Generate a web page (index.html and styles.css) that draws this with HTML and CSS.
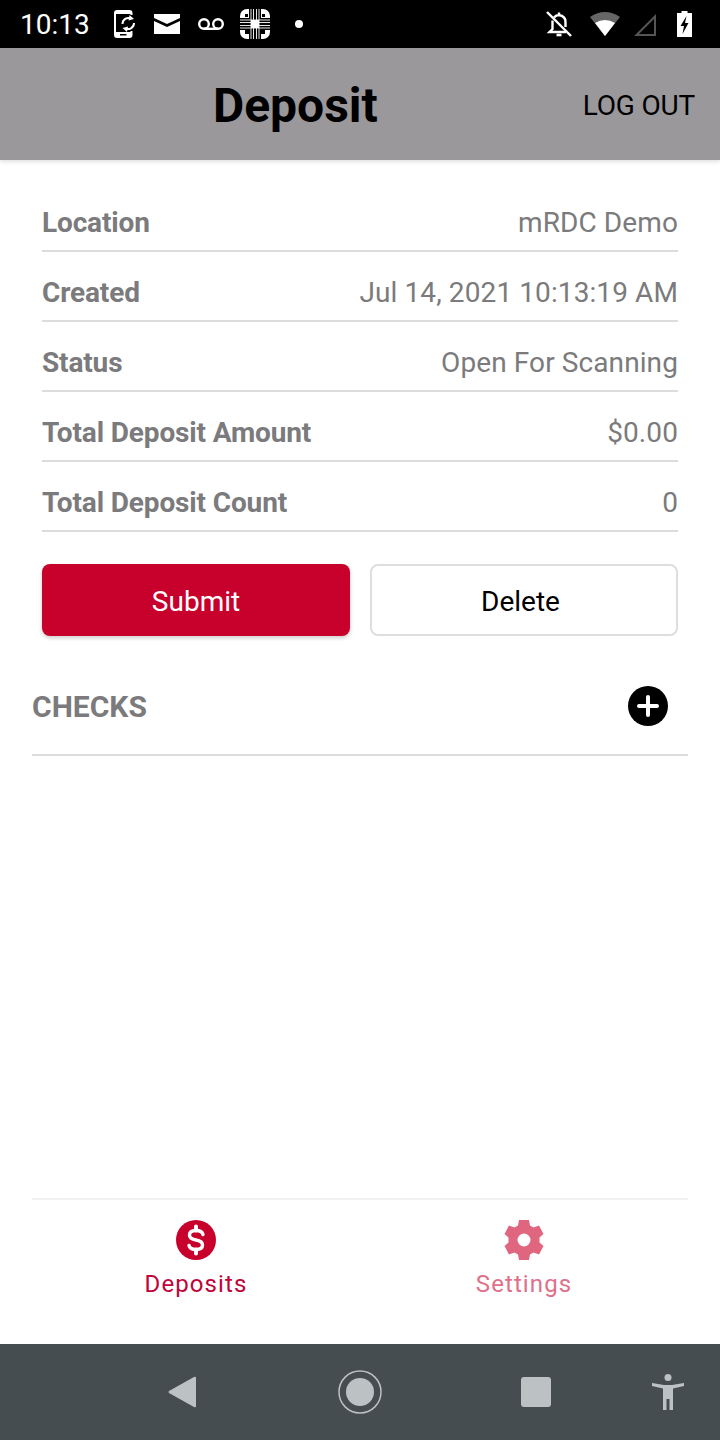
FILE: index.html
```html
<!DOCTYPE html>
<html lang="en">
<head>
  <meta charset="UTF-8" />
  <meta name="viewport" content="width=device-width, initial-scale=1.0" />
  <title>Deposit</title>
  <link rel="stylesheet" href="styles.css">
</head>
<body>
  <!-- Android status bar -->
  <div class="status-bar">
    <span class="clock">10:13</span>
    <svg class="st-sync" width="22" height="28" viewBox="0 0 22 28">
      <path d="M17.500 5V3Q17.500 1 15.500 1H3Q1 1 1 3V25Q1 27 3 27H15.500Q17.500 27 17.500 25V21" fill="none" stroke="#fff" stroke-width="2"/>
      <rect x="1" y="1" width="16.500" height="3" fill="#fff"/>
      <rect x="1" y="22" width="16.500" height="5" fill="#fff"/>
      <rect x="6" y="24" width="6.500" height="1.500" fill="#000"/>
      <path d="M8.500 14A6 6 0 0 1 17 8.500M20 13A6 6 0 0 1 11.500 18.500" fill="none" stroke="#fff" stroke-width="2"/>
      <path d="M15.500 5L20 9L14.500 10.500ZM13 22L8.500 18L14 16.500Z" fill="#fff"/>
    </svg>
    <svg class="st-mail" width="26" height="20" viewBox="0 0 26 20">
      <path d="M0 0H26V4L13 10L0 4ZM0 7L13 13L26 7V20H0Z" fill="#fff"/>
    </svg>
    <svg class="st-voicemail" width="26" height="12" viewBox="0 0 26 12">
      <path d="M6 10.800H20" stroke="#fff" stroke-width="2.400"/>
      <circle cx="6" cy="6" r="4.800" fill="none" stroke="#fff" stroke-width="2.400"/>
      <circle cx="20" cy="6" r="4.800" fill="none" stroke="#fff" stroke-width="2.400"/>
    </svg>
    <svg class="st-grid" width="30" height="30" viewBox="0 0 30 30">
      <rect width="30" height="30" rx="7" fill="#fff"/>
      <path d="M9 0H21V9H30V21H21V30H9V21H0V9H9Z" fill="#000"/>
      <path d="M11 0V30M13.500 0V30M16.500 0V30M19 0V30M0 11H30M0 13.500H30M0 16.500H30M0 19H30" stroke="#fff" stroke-width=".9"/>
      <rect x="11" y="11" width="8" height="8" fill="#fff"/>
      <rect x="21" y="21" width="4" height="4" fill="#000"/>
      <rect x="5" y="21" width="4" height="4" fill="#000"/>
      <rect x="5" y="5" width="3" height="3" fill="#000"/>
      <rect x="22" y="5" width="3" height="3" fill="#000"/>
    </svg>
    <span class="st-dot"></span>
    <span class="st-spacer"></span>
    <svg class="st-bell" width="26" height="26" viewBox="0 0 26 26">
      <path d="M13 1.500V4M6.500 9.500V18L3.500 21H20M19.500 16V11Q19.500 5 13 4Q10 4 8 6.500" fill="none" stroke="#fff" stroke-width="2.400"/>
      <path d="M10.500 24H15.500" stroke="#fff" stroke-width="2.600"/>
      <path d="M1 1L25 25" stroke="#fff" stroke-width="2.400"/>
    </svg>
    <svg class="st-wifi" width="30" height="24" viewBox="0 0 30 24">
      <path d="M0 5Q15 -5 30 5L15 24Z" fill="#666"/>
      <path d="M5 11Q15 5 25 11L15 24Z" fill="#fff"/>
    </svg>
    <svg class="st-signal" width="22" height="22" viewBox="0 0 22 22">
      <path d="M21 2.500V21H2.500Z" fill="none" stroke="#555" stroke-width="2"/>
    </svg>
    <svg class="st-battery" width="15" height="26" viewBox="0 0 15 26">
      <path d="M4.500 0H10.500V2H15V26H0V2H4.500Z" fill="#fff"/>
      <path d="M9.500 5L3.500 15H7L5.500 23L11.500 12H8Z" fill="#000"/>
    </svg>
  </div>

  <div class="header">
    <h1 class="title">Deposit</h1>
    <span class="logout">LOG OUT</span>
  </div>

  <div class="content">
    <div class="details">
      <div class="row"><span class="label">Location</span><span class="value">mRDC Demo</span></div>
      <div class="row"><span class="label">Created</span><span class="value">Jul 14, 2021 10:13:19 AM</span></div>
      <div class="row"><span class="label">Status</span><span class="value">Open For Scanning</span></div>
      <div class="row"><span class="label">Total Deposit Amount</span><span class="value">$0.00</span></div>
      <div class="row"><span class="label">Total Deposit Count</span><span class="value">0</span></div>
    </div>

    <div class="actions">
      <button class="btn btn-submit">Submit</button>
      <button class="btn btn-delete">Delete</button>
    </div>

    <div class="checks">
      <span class="checks-title">CHECKS</span>
      <svg class="add" width="40" height="40" viewBox="0 0 40 40">
        <circle cx="20" cy="20" r="20" fill="#000"/>
        <path d="M20 11V29M11 20H29" stroke="#fff" stroke-width="4" stroke-linecap="round"/>
      </svg>
    </div>
  </div>

  <div class="tabs">
    <div class="tab tab-active">
      <svg width="40" height="40" viewBox="0 0 40 40">
        <circle cx="20" cy="20" r="20" fill="#c8002c"/>
        <path d="M27 14.500Q26 10.500 20 10.500Q13.500 10.500 13.500 15Q13.500 19 20 20Q26.500 21 26.500 25Q26.500 29.500 20 29.500Q14 29.500 13 25.500" fill="none" stroke="#fff" stroke-width="3.400" stroke-linecap="round"/>
        <path d="M20 6.500V10.500M20 29.500V33.500" stroke="#fff" stroke-width="4" stroke-linecap="round"/>
      </svg>
      <span>Deposits</span>
    </div>
    <div class="tab tab-muted">
      <svg width="40" height="40" viewBox="0 0 40 40">
        <path fill-rule="evenodd" fill="#e0657f" d="M15 0H25L26 5.500L29.500 7.500L35 5.500L39.500 14L35.500 17.500V22.500L39.500 26L35 34.500L29.500 32.500L26 34.500L25 40H15L14 34.500L10.500 32.500L5 34.500L.5 26L4.500 22.500V17.500L.5 14L5 5.500L10.500 7.500L14 5.500ZM20 13.500A6.500 6.500 0 1 0 20 26.500A6.500 6.500 0 1 0 20 13.500Z"/>
      </svg>
      <span>Settings</span>
    </div>
  </div>

  <!-- Android nav bar -->
  <div class="nav-bar">
    <svg class="nav-back" width="28" height="32" viewBox="0 0 28 32">
      <path d="M26 1Q28 0 28 2V30Q28 32 26 31L1 17Q0 16 1 15Z" fill="#bcc1c4"/>
    </svg>
    <svg class="nav-home" width="44" height="44" viewBox="0 0 44 44">
      <circle cx="22" cy="22" r="21" fill="none" stroke="#bcc1c4" stroke-width="1.500"/>
      <circle cx="22" cy="22" r="14" fill="#bcc1c4"/>
    </svg>
    <span class="nav-recent"></span>
    <svg class="nav-access" width="32" height="36" viewBox="0 0 32 36">
      <circle cx="16" cy="3.500" r="3.500" fill="#bcc1c4"/>
      <path d="M0 9L12 11H20L32 9V12L21 14.500V36H17.500V25H14.500V36H11V14.500L0 12Z" fill="#bcc1c4"/>
    </svg>
  </div>
</body>
</html>
```

FILE: styles.css
```css
* {
  box-sizing: border-box;
}

body {
  margin: 0;
  width: 720px;
  height: 1440px;
  display: flex;
  flex-direction: column;
  overflow: hidden;
  background: #fff;
  font-family: Roboto, "Liberation Sans", sans-serif;
}

/* Status bar */
.status-bar {
  height: 48px;
  background: #000;
  color: #fff;
  display: flex;
  align-items: center;
  padding-left: 20px;
  flex-shrink: 0;
}

.clock {
  font-size: 28px;
  width: 94px;
}

.st-mail { margin-left: 18px; }
.st-voicemail { margin-left: 18px; }
.st-grid { margin-left: 16px; }

.st-dot {
  width: 8px;
  height: 8px;
  border-radius: 50%;
  background: #fff;
  margin-left: 25px;
}

.st-spacer { flex: 1; }
.st-wifi { margin-left: 18px; }
.st-signal { margin-left: 14px; margin-top: 2px; }
.st-battery { margin-left: 21px; margin-right: 28px; }

/* Header */
.header {
  height: 112px;
  background: #9a989a;
  display: flex;
  align-items: center;
  justify-content: space-between;
  padding: 3px 25px 0 213px;
  box-shadow: 0 2px 4px rgba(0, 0, 0, 0.12);
  flex-shrink: 0;
}

.title {
  margin: 0;
  font-size: 48px;
  font-weight: 700;
  color: #000;
}

.logout {
  font-size: 28px;
  color: #000;
  letter-spacing: -0.2px;
}

/* Main */
.content {
  flex: 1;
  padding: 22px 32px 0;
}

.details {
  padding: 0 10px;
}

.row {
  height: 70px;
  padding-top: 12px;
  display: flex;
  align-items: center;
  justify-content: space-between;
  border-bottom: 2px solid #dcdcdc;
  font-size: 28px;
  color: #7b7a7c;
}

.label {
  font-weight: 700;
  letter-spacing: -0.14px;
}

.value {
  letter-spacing: 0.1px;
}

.actions {
  display: grid;
  grid-template-columns: 1fr 1fr;
  gap: 20px;
  padding: 0 10px;
  margin-top: 32px;
}

.btn {
  height: 72px;
  border-radius: 8px;
  font-family: inherit;
  font-size: 28px;
  padding: 2px 0 0;
}

.btn-submit {
  background: #c8002c;
  color: #fff;
  border: none;
  box-shadow: 0 2px 4px rgba(0, 0, 0, 0.2);
}

.btn-delete {
  background: #fff;
  color: #000;
  border: 2px solid #dedede;
  padding-right: 7px;
}

.checks {
  height: 120px;
  padding-top: 22px;
  padding-right: 20px;
  display: flex;
  align-items: center;
  justify-content: space-between;
  border-bottom: 2px solid #dcdcdc;
}

.checks-title {
  font-size: 30px;
  font-weight: 700;
  color: #7b7a7c;
}

/* Bottom tabs */
.tabs {
  height: 146px;
  margin: 0 32px;
  border-top: 2px solid #f2f2f4;
  display: flex;
  flex-shrink: 0;
}

.tab {
  flex: 1;
  display: flex;
  flex-direction: column;
  align-items: center;
  padding-top: 20px;
  gap: 9px;
  font-size: 24px;
  letter-spacing: 1.1px;
  line-height: 30px;
}

.tab-active { color: #c0043a; }
.tab-muted { color: #e0708a; }

/* Nav bar */
.nav-bar {
  height: 96px;
  background: #464d51;
  display: flex;
  align-items: center;
  padding-left: 168px;
  flex-shrink: 0;
}

.nav-home { margin-left: 142px; }

.nav-recent {
  width: 30px;
  height: 30px;
  border-radius: 3px;
  background: #bcc1c4;
  margin-left: 139px;
}

.nav-access { margin-left: 101px; }
```
